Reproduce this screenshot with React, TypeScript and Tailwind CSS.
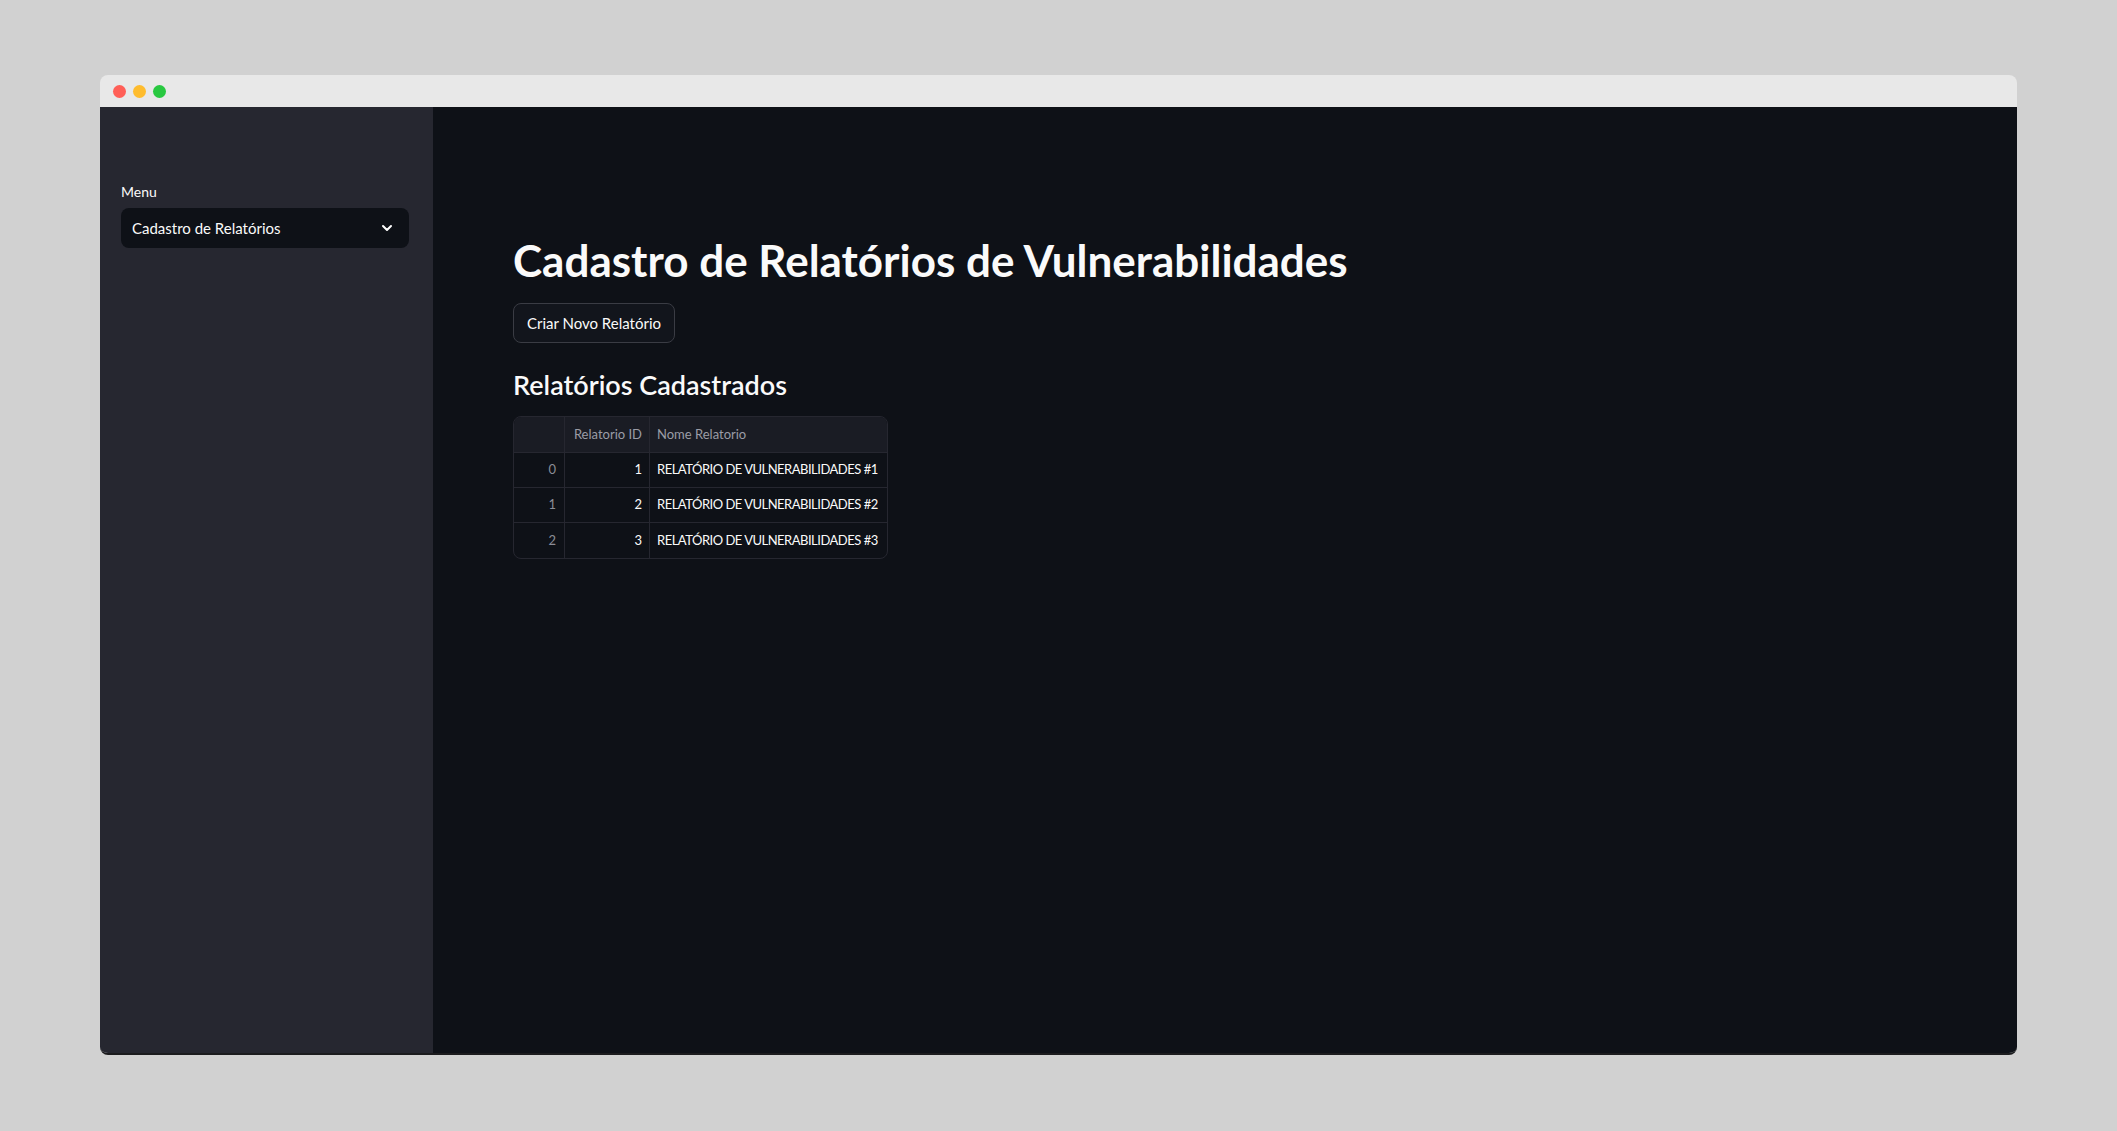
import { ChevronDown } from "lucide-react";

const rows = [
  { idx: 0, id: 1, nome: "RELATÓRIO DE VULNERABILIDADES #1" },
  { idx: 1, id: 2, nome: "RELATÓRIO DE VULNERABILIDADES #2" },
  { idx: 2, id: 3, nome: "RELATÓRIO DE VULNERABILIDADES #3" },
];

function ReportsTable() {
  return (
    <div className="w-[375px] rounded-[8px] border border-[#262730] overflow-hidden text-[13px]">
      <div className="flex h-[36px] bg-[#1a1c24] border-b border-[#262730] text-[#9a9ca6]">
        <div className="w-[51px] shrink-0 border-r border-[#262730]" />
        <div className="w-[85px] shrink-0 border-r border-[#262730] flex items-center justify-end pr-[7px] whitespace-nowrap">
          Relatorio ID
        </div>
        <div className="flex-1 flex items-center pl-[7px] whitespace-nowrap">Nome Relatorio</div>
      </div>
      {rows.map((r, i) => (
        <div
          key={r.id}
          className={`flex h-[35px] ${i < rows.length - 1 ? "border-b border-[#262730]" : ""}`}
        >
          <div className="w-[51px] shrink-0 border-r border-[#262730] flex items-center justify-end pr-[8px] text-[#8b8d96]">
            {r.idx}
          </div>
          <div className="w-[85px] shrink-0 border-r border-[#262730] flex items-center justify-end pr-[7px] text-[#fafafa]">
            {r.id}
          </div>
          <div className="flex-1 flex items-center pl-[7px] text-[#fafafa] whitespace-nowrap tracking-[-0.5px]">
            {r.nome}
          </div>
        </div>
      ))}
    </div>
  );
}

export default function App() {
  return (
    <div
      className="min-h-screen bg-[#d1d1d1] pt-[75px] pl-[100px]"
      style={{ fontFamily: "Lato, 'Noto Sans', sans-serif" }}
    >
      <div className="w-[1917px] h-[980px] flex flex-col rounded-[8px] overflow-hidden border-b-2 border-[#1c1c1e]">
        <div className="h-[32px] bg-[#e8e8e8] flex items-center gap-[7px] pl-[13px]">
          <span className="w-[13px] h-[13px] rounded-full bg-[#ff5f57]" />
          <span className="w-[13px] h-[13px] rounded-full bg-[#febc2e]" />
          <span className="w-[13px] h-[13px] rounded-full bg-[#28c840]" />
        </div>
        <div className="flex flex-1">
          <aside className="w-[333px] shrink-0 bg-[#262730] pl-[21px] pr-[24px] pt-[75px]">
            <div className="text-[14px] text-[#fafafa] leading-[20px] mb-[6px]">Menu</div>
            <div className="h-[40px] rounded-[8px] bg-[#0e1117] flex items-center justify-between pl-[11px] pr-[14px]">
              <span className="text-[15px] text-[#fafafa]">Cadastro de Relatórios</span>
              <ChevronDown className="w-[16px] h-[16px] text-white" strokeWidth={3} />
            </div>
          </aside>
          <main className="flex-1 bg-[#0e1117] pl-[80px] pt-[126px]">
            <h1 className="text-[44px] font-bold text-[#fafafa] leading-[54px] mb-[16px]">
              Cadastro de Relatórios de Vulnerabilidades
            </h1>
            <button className="h-[40px] px-[13px] rounded-[8px] border border-[#3a3c44] bg-[#12151c] text-[#fafafa] text-[15px]">
              Criar Novo Relatório
            </button>
            <h3 className="text-[27px] font-semibold text-[#fafafa] leading-[36px] mt-[24px] mb-[13px]">
              Relatórios Cadastrados
            </h3>
            <ReportsTable />
          </main>
        </div>
      </div>
    </div>
  );
}
